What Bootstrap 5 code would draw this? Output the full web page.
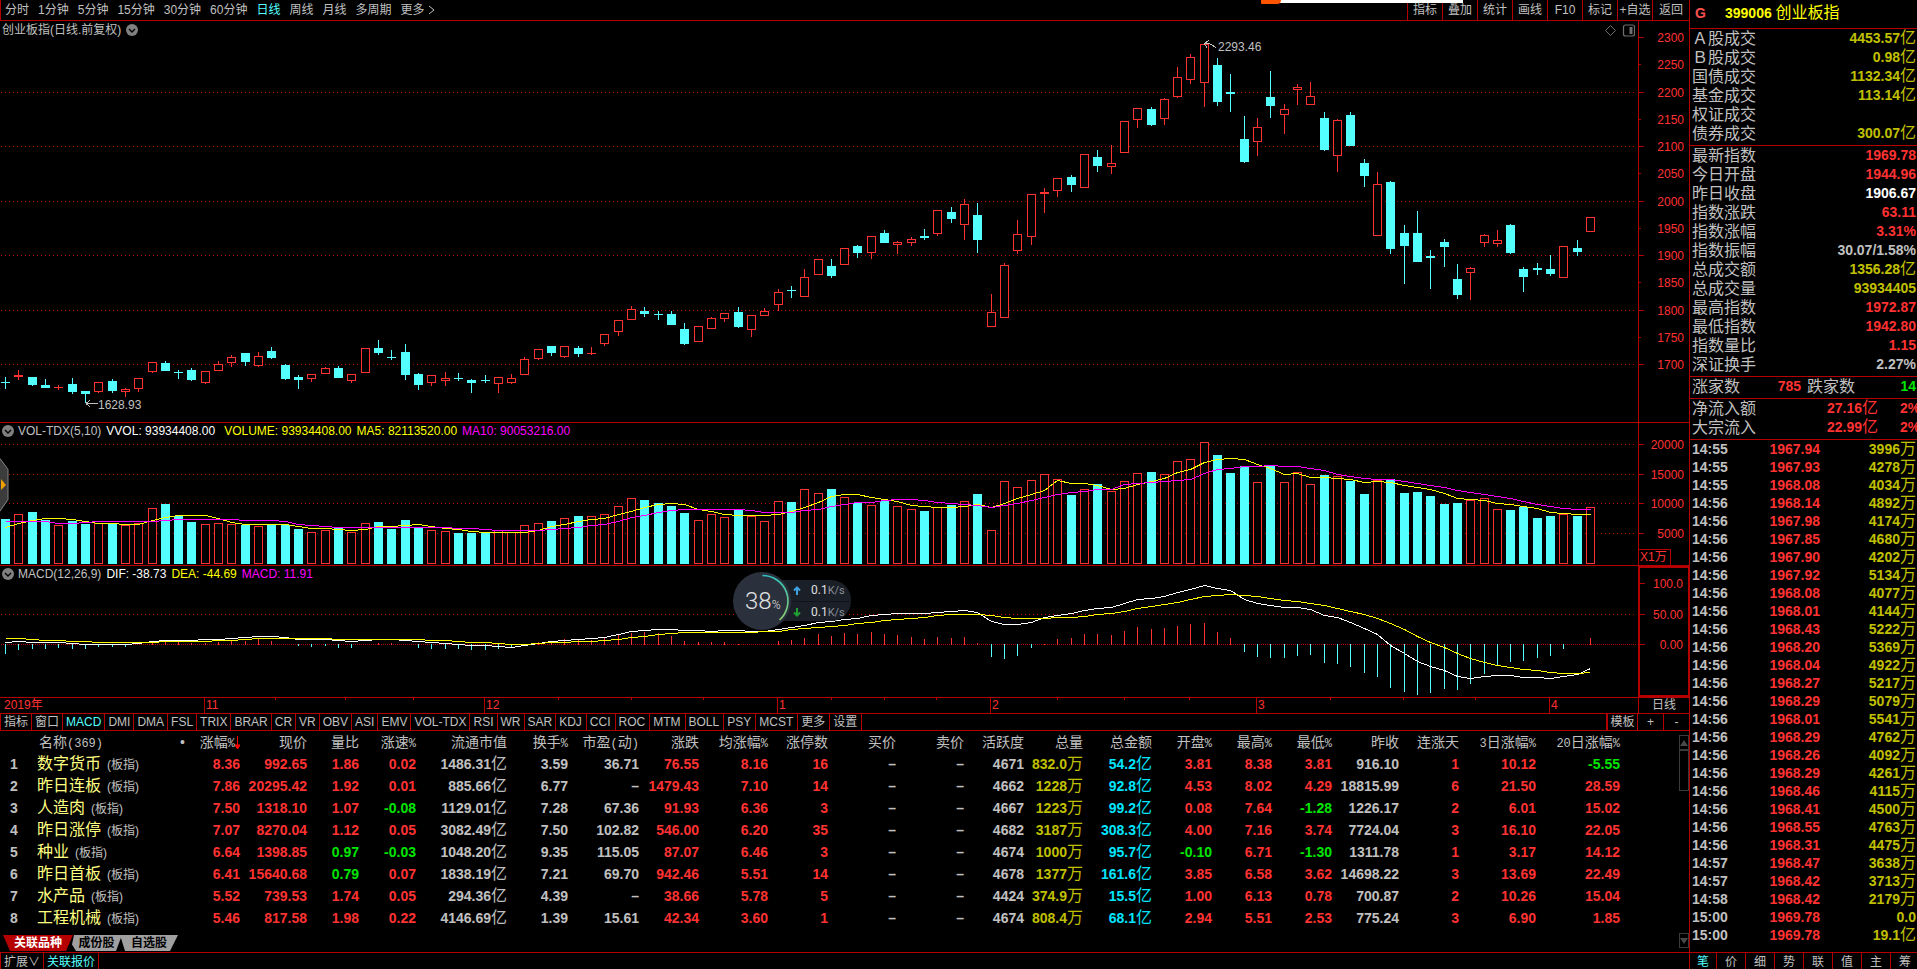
<!DOCTYPE html>
<html lang="zh-CN">
<head>
<meta charset="utf-8">
<meta name="viewport" content="width=device-width, initial-scale=1">
<title>399006 创业板指</title>
<link href="https://cdn.jsdelivr.net/npm/bootstrap@5.3.0/dist/css/bootstrap.min.css" rel="stylesheet">
<style>
:root{--line:#b40000;--up:#ff3232;--down:#00e600;--bar:#54ffff;--txt:#c0c0c0;--amt:#c0c000}
body{background:#000;color:var(--txt);font:12px/16px "Liberation Sans","Noto Sans CJK SC",sans-serif;overflow:hidden}
button{background:none;border:0;color:inherit;padding:0;font:inherit;white-space:nowrap}
.up{color:var(--up)}.down{color:var(--down)}.amt{color:var(--amt)}.cash{color:#00e6ff}.hot{color:var(--bar)!important}
.line-b{border-bottom:1px solid var(--line)}.line-t{border-top:1px solid var(--line)}.line-l{border-left:1px solid var(--line)}
.main-col{min-width:0}
.topbar{height:21px;line-height:17px}
.periods{gap:9px;padding-left:4px}
.tools button{width:35px;border-left:1px solid var(--line)}
.tools button:last-child{width:37px}
.strip{top:0;left:65.8%;width:10.5%;height:3px;background:#fff}
.strip::before{content:"";position:absolute;left:0;top:0;width:20px;height:4px;background:#ff5500;border-radius:0 0 12px 4px}
.pane-price{min-height:402px}.pane-vol{height:143px}.pane-macd{height:132px}
.plot{min-width:0}
.plot>svg{display:block;width:100%;height:100%;shape-rendering:crispEdges}
.axis{width:51px;border-left:1px solid var(--line);color:var(--up);text-align:right}
.axis.period{color:var(--txt);text-align:center}
.axis ol{list-style:none;margin:0;padding:0 5px 0 0}
.axis li{position:relative;line-height:16px}
.axis li::before{content:"";position:absolute;left:0;top:7px;width:5px;height:1px;background:var(--line)}
.axis li.half::before{width:2px}
.axis-price ol{height:100%;padding-top:9px;padding-bottom:49px}
.axis-vol ol{height:119px;padding-top:14px}
.unit-box{position:absolute;left:0;bottom:0;width:32px;border:1px solid var(--line);border-left:0;border-bottom:0;text-align:left;padding-left:1px;line-height:15px}
.axis-macd{border:2px solid var(--line);border-right-width:1px}
.axis-macd ol{height:85px;padding-top:8px}
.legend{position:absolute;left:2px;top:0;gap:5px;line-height:16px;white-space:nowrap}
.legend.caption{line-height:18px}
.legend svg{width:12px;height:12px}
.legend svg:first-child{margin-right:-1px}
.legend .wide{margin-right:4px}
.mark-low{position:absolute;left:98px;top:376px}
.mark-high{position:absolute;left:1218px;top:18px}
.corner{position:absolute;right:3px;top:3px}
.w{color:#fff}.y{color:#ff0}.m{color:#f0f}
.handle{left:0;top:458px}
.dates{height:16px;line-height:15px;color:var(--up)}
.months{display:grid;grid-template-columns:204fr 280fr 293fr 213fr 266fr 293fr 89fr}
.months span+span{border-left:1px solid var(--line);padding-left:1px}
.months span{position:relative}
.months i{position:absolute;top:0;left:25%;width:50%;height:2px;border:1px solid var(--line);border-width:0 1px}
.months i::after{content:"";position:absolute;left:50%;width:1px;height:2px;background:var(--line)}
.indicators{height:17px;line-height:15px}
.indicators button{padding:0 3px;border-right:1px solid var(--line)}
.indicators button:nth-child(n+18){padding-right:4px}
.indicators .end button{border-right:0;border-left:1px solid var(--line);width:26px}
.indicators .end button:first-child{width:31px;padding:0;border-left-width:2px}
.quote-area{height:221px}
.quotes{table-layout:fixed;width:100%;font-weight:700;font-size:14px;line-height:20px;color:var(--txt)}
.quotes td,.quotes th{height:22px;padding:0;text-align:right;white-space:nowrap}
.quotes th{font-weight:400}
.quotes td:first-child{text-align:center}
.quotes th:nth-child(2),.quotes td:nth-child(2){text-align:left;padding-left:9px}
.quotes th:nth-child(2){padding-left:11px}
.quotes .title{font-size:16px;color:#ffff80;font-weight:400}
.quotes .tag{font-size:12px;font-weight:400;margin-left:6px}
.quotes td span{line-height:16px}
.hw{font:12px/16px "Liberation Mono",monospace}
.unit{font-weight:400;font-size:16px;line-height:16px}
.scroll{width:14px}
.scroll .knob,.scroll .thumb{border:1px solid #3a3a3a}
.scroll .knob{height:15px;display:grid;place-items:center}
.scroll .thumb{height:41px}
.sheets{position:absolute;left:3px;bottom:1px;height:16px;line-height:16px;font-weight:700}
.sheets button{background:#a0a0a0;color:#000;height:16px}
.sheets .s1{background:var(--line);color:#fff;width:70px;clip-path:polygon(0 0,100% 0,calc(100% - 7px) 100%,7px 100%)}
.sheets .s2{width:51px;margin-left:-2px;clip-path:polygon(3px 0,100% 0,calc(100% - 6px) 100%,5px 100%,1px 60%)}
.sheets .s3{width:58px;margin-left:-2px;clip-path:polygon(0 0,100% 0,calc(100% - 8px) 100%,5px 100%)}
.foot{height:17px;line-height:18px}
.foot .cell{padding:0 3px;border-right:1px solid var(--line)}
.side{width:228px;border-left:1px solid var(--line);overflow:hidden;font-size:14px;font-weight:700}
.side h1{font-size:14px;line-height:26px;height:28px;margin:0;font-weight:700;padding-left:5px;color:#ff0}
.side h1 b{width:30px;color:#ff5050}
.side .k{font-size:16px;font-weight:400;color:var(--txt)}
.side .k.y{color:#ff0}
.side dl{margin:0;padding:0 1px 2px 2px;line-height:19px}
.side dl>div{display:flex;height:19px;white-space:nowrap}
.side dt,.side dd{margin:0}
.side dd{margin-left:auto}
.side .rise{width:61px;margin:0;text-align:right}
.side .fall{padding-left:6px}
.side dl.net dt{width:64px}
.side dl.net dd{flex:none}
.side dl.net dd:nth-of-type(1){width:122px;margin:0;text-align:right}
.side dl.net dd:nth-of-type(2){margin-left:22px}
.ticks{width:100%;table-layout:fixed;line-height:18px}
.ticks td{padding:0 1px 0 2px;height:18px}
.ticks td:first-child{width:54px}
.ticks td:nth-child(2){width:77px;text-align:right;color:var(--up)}
.ticks td:nth-child(3){text-align:right;color:var(--amt)}
.side nav{font-size:12px;font-weight:400;height:17px;line-height:18px}
.side nav button{width:29px;border-right:1px solid var(--line);flex:none}
.side nav button:first-child{width:27px}
.meter{left:733px;top:571px;width:118px;height:60px;font-family:Roboto,sans-serif;color:#e0e0e0}
.meter .dial{position:absolute;left:0;top:0}
.meter .pct{position:absolute;left:12px;top:17px;font-size:24px;line-height:26px;font-weight:300}
.meter .pct small{font-size:12px}
.meter .speed{position:absolute;left:48px;top:9px;width:70px;height:41px;background:#1b1f28;border-radius:0 20px 20px 0;padding-left:12px;line-height:20px}
.meter .speed div+div{border-top:1px solid #11141a}
.meter .speed svg{margin-right:10px}
.meter .speed small{font-size:11px;color:#8a8f98}
</style>
</head>
<body class="vh-100 d-flex position-relative">
<main class="main-col flex-grow-1 d-flex flex-column">
  <header class="topbar line-b d-flex justify-content-between">
    <nav class="periods d-flex line-l" aria-label="周期">
      <button>分时</button><button>1分钟</button><button>5分钟</button><button>15分钟</button><button>30分钟</button><button>60分钟</button><button class="hot">日线</button><button>周线</button><button>月线</button><button>多周期</button><button>更多 <svg width="7" height="10" viewBox="0 0 7 10" fill="none" stroke="#c0c0c0"><path d="M1 1l5 4-5 4"/></svg></button>
    </nav>
    <div class="tools d-flex"><button>指标</button><button>叠加</button><button>统计</button><button>画线</button><button>F10</button><button>标记</button><button>+自选</button><button>返回</button></div>
  </header>

  <section class="pane-price flex-grow-1 d-flex line-b">
    <div class="plot flex-grow-1 position-relative">
      <svg id="price" viewBox="0 0 1638 401" preserveAspectRatio="none"></svg>
      <div class="legend caption d-flex align-items-center"><span>创业板指(日线.前复权)</span><svg viewBox="0 0 12 12"><circle cx="6" cy="6" r="6" fill="#808080"/><path d="M3 5l3 3 3-3" fill="none" stroke="#000" stroke-width="1.4"/></svg></div>
      <span class="mark-low">1628.93</span><span class="mark-high">2293.46</span>
      <div class="corner"><svg class="d-block" width="30" height="13" viewBox="0 0 30 13" fill="none" stroke="#707070"><path d="M5.500 1.500l5 5-5 5-5-5z"/><rect x="18.500" y="1" width="11" height="11" rx="2" stroke-width="1.200"/><path d="M26 3v7" stroke-width="3"/></svg></div>
    </div>
    <div class="axis axis-price"><ol class="d-flex flex-column justify-content-between"><li>2300</li><li class="half">2250</li><li>2200</li><li class="half">2150</li><li>2100</li><li class="half">2050</li><li>2000</li><li class="half">1950</li><li>1900</li><li class="half">1850</li><li>1800</li><li class="half">1750</li><li>1700</li></ol></div>
  </section>

  <section class="pane-vol d-flex line-b">
    <div class="plot flex-grow-1 position-relative">
      <svg id="vol" viewBox="0 0 1638 142" preserveAspectRatio="none"></svg>
      <div class="legend d-flex align-items-center"><svg viewBox="0 0 12 12"><circle cx="6" cy="6" r="6" fill="#808080"/><path d="M3 5l3 3 3-3" fill="none" stroke="#000" stroke-width="1.4"/></svg><span>VOL-TDX(5,10)</span><span class="w wide">VVOL: 93934408.00</span><span class="y">VOLUME: 93934408.00</span><span class="y">MA5: 82113520.00</span><span class="m">MA10: 90053216.00</span></div>
    </div>
    <div class="axis axis-vol position-relative"><ol class="d-flex flex-column justify-content-between"><li>20000</li><li>15000</li><li>10000</li><li>5000</li></ol><span class="unit-box">X1万</span></div>
  </section>

  <section class="pane-macd d-flex line-b">
    <div class="plot flex-grow-1 position-relative">
      <svg id="macd" viewBox="0 0 1638 131" preserveAspectRatio="none"></svg>
      <div class="legend d-flex align-items-center"><svg viewBox="0 0 12 12"><circle cx="6" cy="6" r="6" fill="#808080"/><path d="M3 5l3 3 3-3" fill="none" stroke="#000" stroke-width="1.4"/></svg><span>MACD(12,26,9)</span><span class="w">DIF: -38.73</span><span class="y">DEA: -44.69</span><span class="m">MACD: 11.91</span></div>
    </div>
    <div class="axis axis-macd"><ol class="d-flex flex-column justify-content-between"><li>100.0</li><li>50.00</li><li>0.00</li></ol></div>
  </section>

  <div class="dates d-flex line-b">
    <div class="months flex-grow-1"><span class="ps-1">2019年</span><span>11<i></i></span><span>12<i></i></span><span>1<i></i></span><span>2<i></i></span><span>3<i></i></span><span>4</span></div>
    <div class="axis period">日线</div>
  </div>

  <div class="indicators line-b d-flex justify-content-between">
    <div class="d-flex line-l" id="indicators"></div>
    <div class="end d-flex"><button>模板</button><button>+</button><button>-</button></div>
  </div>

  <section class="quote-area d-flex position-relative">
    <div class="flex-grow-1"><table class="quotes"><colgroup id="cols"></colgroup><thead><tr id="heads"></tr></thead><tbody id="rows"></tbody></table></div>
    <div class="scroll d-flex flex-column justify-content-between pt-1" aria-hidden="true">
      <div><div class="knob"><svg width="8" height="6"><path d="M0 6l4-6 4 6z" fill="#484848"/></svg></div><div class="thumb"></div></div>
      <div class="knob mb-1"><svg width="8" height="6"><path d="M0 0l4 6 4-6z" fill="#484848"/></svg></div>
    </div>
    <div class="sheets d-flex"><button class="s1">关联品种</button><button class="s2">成份股</button><button class="s3">自选股</button></div>
  </section>

  <footer class="foot line-t d-flex"><button class="cell line-l">扩展∨</button><button class="cell hot">关联报价</button></footer>
</main>

<aside class="side d-flex flex-column flex-shrink-0">
  <h1 class="d-flex"><b>G</b><span>399006 <span class="k y">创业板指</span></span></h1>
  <dl class="line-t" id="turnover"></dl>
  <dl class="line-t" id="stats"></dl>
  <dl class="line-t"><div><dt class="k">涨家数</dt><dd class="up rise">785</dd><dt class="k fall">跌家数</dt><dd class="down">14</dd></div></dl>
  <dl class="line-t net"><div><dt class="k">净流入额</dt><dd class="up">27.16<span class="unit">亿</span></dd><dd class="up">2%</dd></div><div><dt class="k">大宗流入</dt><dd class="up">22.99<span class="unit">亿</span></dd><dd class="up">2%</dd></div></dl>
  <div class="line-t"><table class="ticks"><tbody id="ticks"></tbody></table></div>
  <nav class="line-t d-flex mt-auto" aria-label="明细"><button class="hot">笔</button><button>价</button><button>细</button><button>势</button><button>联</button><button>值</button><button>主</button><button>筹</button></nav>
</aside>

<div class="strip position-absolute"></div>
<svg class="handle position-absolute" width="9" height="54" viewBox="0 0 9 54"><path d="M0 0l8 11v31L0 54z" fill="#3c3c3c"/><path d="M0 .5l8 11v30L0 53" fill="none" stroke="#808080"/><path d="M1 21l5 6-5 5z" fill="#f0a000"/></svg>
<div class="meter position-absolute">
  <div class="speed"><div><svg width="8" height="9" viewBox="0 0 8 9"><path d="M4 9V3M1 4.500l3-3 3 3" fill="none" stroke="#3fa0e0" stroke-width="2"/></svg>0.1<small>K/s</small></div><div><svg width="8" height="9" viewBox="0 0 8 9"><path d="M4 0v6M1 4.500l3 3 3-3" fill="none" stroke="#20a030" stroke-width="2"/></svg>0.1<small>K/s</small></div></div>
  <svg class="dial" width="60" height="60" viewBox="0 0 60 60"><defs><linearGradient id="ring" x1="0" y1="0" x2="0" y2="1"><stop offset="0" stop-color="#2fc4c0"/><stop offset="1" stop-color="#8fd070"/></linearGradient></defs><circle cx="29" cy="30" r="29" fill="#2b303d"/><path d="M29.500 4.500A25.500 25.500 0 0 1 46.500 49" fill="none" stroke="url(#ring)" stroke-width="1.600"/></svg>
  <div class="pct">38<small>%</small></div>
</div>

<script>
// Bars: colour, high, body top, body bottom, low. All y values are thirds of a pixel from each block's base.
const bars=[[960,`c171 186 189 207,r150 165 171 180,c171 171 195 198,c177 195 204 204,r195 201 204 210,c174 192 216 222,c213 213 222 250,r186 186 216 219,c177 183 213 219,r204 207 216 231,r174 174 207 216,r126 126 156 159,c123 129 153 153,c150 156 159 177,c144 150 180 183,r153 153 189 192,r123 132 153 153,r105 111 129 140,c99 99 126 138,r96 108 138 141,c81 93 114 117,c132 135 177 180,c165 171 180 207,r162 162 177 186,r141 144 162 162,c138 144 174 174,r162 162 183 189,r84 84 159 159,c60 84 99 105,c90 111 114 120,c72 96 165 180,c159 162 195 210,r165 165 189 198,r156 174 183 198,c159 174 177 183,c177 180 189 219,c165 180 183 189,r171 171 192 219,r162 174 189 192,r111 117 165 165,r87 87 117 120,c78 78 99 108`],
[510,`r528 528 561 564,c528 534 552 561,r531 549 552 555,r492 492 522 528,r450 450 486 498,r408 417 450 450,c411 423 432 441,c423 432 435 450,c423 432 465 465,c459 477 522 525,r468 468 516 516,r441 444 477 477,r429 429 447 456,c411 426 471 474,r435 435 480 501,r414 423 438 438,r357 366 405 423,c348 360 363 384,r297 321 381 381,r267 267 315 315,c267 288 318 324,r234 234 285 285,c225 228 249 264,r198 198 249 267,c180 189 219 219,r213 216 225 252,r201 207 219 228,c177 198 204 210,r120 120 192 198,c111 126 147 159,r87 102 165 210,c99 135 210 249,r372 426 471 471,r279 285 444 444,r150 192 243 252,r72 72 201 225,r54 66 72 129,r24 24 63 81,c15 21 45 66`],
[0,`r462 462 564 564,c450 471 498 516,r435 489 501 522,r363 363 459 459,r324 324 360 384,c321 327 375 378,r294 297 357 375,r201 231 291 294,r162 171 240 252,r132 132 249 321,c174 195 306 318,c222 276 282 336,c348 417 486 489,r354 381 426 468,c213 291 318 354,r312 327 345 402,r252 261 270 315,r246 288 315 315,c336 354 450 453,r357 360 468 516,c336 345 438 438,c477 489 528 561,r516 552 708 708,c543 546 747 762,c675 699 738 852,c633 699 786 786,c750 768 774 867,c717 726 741 801,c792 837 885 897,r801 804 819 900,r702 705 729 741,r690 720 732 741,c672 675 759 762,c801 807 831 876,c789 804 810 825,c765 807 822 828,r738 738 834 834,c720 744 756 768,r651 651 696 696`]]
.flatMap(([b,s])=>s.split(',').map(t=>({c:t[0],v:t.slice(1).split(' ').map(n=>Math.round((+n+b)/3)-21)})));
const seq=(...parts)=>parts.flatMap(([b,s])=>s.split(' ').map(n=>+n+b));
const vol=seq([-300,'597 582 576 600 615 603 612 609 612 615 609 564 552 588 606 612 609 612 615 618 615 615 627 636 630 621 636 609 606 627 600 624 630 633 640 640 637 630 637 615 609 603'],[0,'294 288 288 282 258 234 240 249 258 279 300 282 291 270 288 303 243 246 207 219 207 231 249 255 243 258 267 273 261 255 243 222 330 183 201 180 162 177 225 207 192 213 183 159 156 162 123 117 66 105 159 138 186 138 186 156 192 165 168 183 222 180 177 219 216 228 252 249 240 234 267 270 261 294 288 282 288 261']);
const ma5=seq([-300,'620 610 601 595 595 598 604 610 610 611 613 601 592 586 586 586 594 606 613 613 613 613 618 623 625 626 631 628 619 619 616 613 618 624 626 634 637 637 637 636 629 619'],[0,'313 304 298 293 283 272 262 253 250 253 267 273 283 286 286 286 281 273 262 246 227 223 223 230 238 244 254 259 262 262 259 252 261 248 235 223 210 181 189 190 194 206 204 192 182 175 157 147 127 116 115 118 133 145 163 160 171 170 175 176 187 183 187 196 201 206 220 235 238 241 250 253 257 265 277 280 283 283']);
const ma10=seq([-300,'604 604 604 604 610 610 607 604 604 604 604 604 601 598 598 598 598 598 601 601 601 604 613 616 619 622 622 622 622 622 622 622 622 622 624 625 626 631 631 629 629 628'],[0,'324 320 316 311 302 292 284 277 271 268 268 268 268 268 271 276 277 277 271 266 257 251 247 247 241 238 238 241 247 250 253 255 261 254 249 240 232 223 217 212 208 208 193 190 187 184 181 176 160 148 144 139 139 136 138 139 144 151 162 169 175 178 178 183 189 196 202 211 217 223 227 235 243 253 259 265 268 268']);
const dif=seq([420,'247 244 247 247 247 250 253 251 253 253 250 244 241 241 241 238 238 233 232 229 229 232 238 238 238 241 244 239 236 236 239 244 247 250 253 256 256 257 260 255 248 242'],[0,'659 656 655 650 641 633 629 626 626 629 631 632 629 630 632 632 628 622 614 606 602 598 593 584 583 580 580 579 575 574 569 577 602 611 613 605 592 584 580 571 565 562 550 538 535 529 517 508 496 505 511 538 550 556 562 562 566 586 592 606 625 643 675 700 723 739 749 767 774 769 766 766 771 772 775 767 761 744']);
const dea=seq([420,'235 235 238 241 241 244 244 247 247 247 247 247 244 244 244 244 241 241 238 235 235 235 235 235 235 238 238 238 238 238 238 238 241 241 244 247 247 250 253 253 250 247'],[0,'667 664 662 661 656 652 647 643 638 637 637 635 635 635 635 633 632 628 625 622 619 614 610 605 599 597 593 590 586 583 581 581 586 590 595 595 595 592 592 588 583 578 574 565 559 553 547 538 529 526 523 525 529 535 541 544 550 556 563 572 583 595 610 628 647 666 682 700 715 727 734 742 748 751 757 760 760 756']);
const hist=seq([0,'702 690 687 687 684 687 687 681 681 681 673 669 666 667 669 669 666 662 662 658 663 673 679 681 678 684 684 673 669 669 673 684 687 687 687 690 690 686 684 673 667 663 658 660 660 654 645 639 636 640 648 663 666 666 666 672 673 673 663 660 654 642 648 640 642 636 642 645 651 657 651 654 651 669 711 717 708 684 672 657 654 642 642 645 633 621 627 624 618 612 609 636 654 696 711 714 714 708 705 729 732 741 759 771 804 816 825 819 807 810 792 762 738 726 723 714 708 687 673 654']);
const UP='#ff3232',DN='#54ffff',X=i=>Math.round(5+i*13.32);
const grid=(ys,d='1 3')=>ys.map(y=>`<path d="M1 ${y}.5H1636" stroke="#b40000" stroke-dasharray="${d}"/>`).join('');
const rect=(x,y,w,h,f)=>`<rect x="${x}" y="${y}" width="${w}" height="${h}" fill="${f}"/>`;
const hollow=(x,y,w,h)=>`<rect x="${x+.5}" y="${y+.5}" width="${w-1}" height="${Math.max(h-1,1)}" fill="#000" stroke="${UP}"/>`;
const curve=(a,off,c)=>`<polyline fill="none" stroke="${c}" points="${a.map((v,i)=>X(i)+.5+','+(Math.round(v/3-off)+.5)).join(' ')}"/>`;
const $=id=>document.getElementById(id);
$('price').innerHTML=grid([71,125,180,234,289,343])+bars.map(({c,v:[h,t,b,l]},i)=>{const x=X(i),f=c=='r'?UP:DN,n=Math.max(b-t,1);
  return rect(x,h,1,Math.max(l-h,1),f)+(c=='r'&&n>2?hollow(x-4,t,9,n):rect(x-4,t,9,n,f))}).join('')
  +'<path d="M86 382.500h12M86 382.500l4-3M86 382.500l4 3M1204 22.500h5l7 4M1204 22.500l5-3M1204 22.500l3 4" fill="none" stroke="#c0c0c0"/>';
$('vol').innerHTML=grid([21,51,80,110])+vol.map((v,i)=>{const y=Math.round(v/3)-3,x=X(i)-4;return bars[i].c=='r'?hollow(x,y,9,141-y):rect(x,y,9,141-y,DN)}).join('')+curve(ma5,3,'#ff0')+curve(ma10,3,'#f0f');
$('macd').innerHTML=grid([48])+grid([78],'1 1')+hist.map((v,i)=>{const y=Math.round(v/3)-146;return v<673?rect(X(i),y,1,79-y,UP):v>673?rect(X(i),78,1,y-78,DN):''}).join('')+curve(dif,146,'#fff')+curve(dea,146,'#ff0');

$('indicators').innerHTML='指标 窗口 MACD DMI DMA FSL TRIX BRAR CR VR OBV ASI EMV VOL-TDX RSI WR SAR KDJ CCI ROC MTM BOLL PSY MCST 更多 设置'.split(' ').map(t=>`<button${t=='MACD'?' class="hot"':''}>${t}</button>`).join('');

const unit=t=>t.replace(/[亿万]/,'<span class="unit">$&</span>');
$('cols').innerHTML=[28,157,55,67,52,57,91,61,71,60,69,60,68,68,60,59,69,60,60,60,67,60,77,84,0].map(w=>w?`<col style="width:${w}px">`:'<col>').join('');
$('heads').innerHTML='|名称(369)|涨幅%|现价|量比|涨速%|流通市值|换手%|市盈(动)|涨跌|均涨幅%|涨停数|买价|卖价|活跃度|总量|总金额|开盘%|最高%|最低%|昨收|连涨天|3日涨幅%|20日涨幅%|'.split('|').map((t,i)=>`<th scope="col">${t.replace(/[!-~]+/g,'<span class="hw">$&</span>')}${i==1?'<span class="float-end">•</span>':''}${i==2?'<svg width="5" height="14" viewBox="0 0 5 14"><path d="M2.500 0v12M0 9l2.500 4L5 9z" stroke="red" fill="red"/></svg>':''}</th>`).join('');
const tone=(i,t)=>i==15?'amt':i==16?'cash':[6,7,8,12,13,14,20].includes(i)?'':i==4?(+t<1?'down':'up'):t[0]=='-'?'down':'up';
$('rows').innerHTML=`数字货币 8.36 992.65 1.86 0.02 1486.31亿 3.59 36.71 76.55 8.16 16 – – 4671 832.0万 54.2亿 3.81 8.38 3.81 916.10 1 10.12 -5.55
昨日连板 7.86 20295.42 1.92 0.01 885.66亿 6.77 – 1479.43 7.10 14 – – 4662 1228万 92.8亿 4.53 8.02 4.29 18815.99 6 21.50 28.59
人造肉 7.50 1318.10 1.07 -0.08 1129.01亿 7.28 67.36 91.93 6.36 3 – – 4667 1223万 99.2亿 0.08 7.64 -1.28 1226.17 2 6.01 15.02
昨日涨停 7.07 8270.04 1.12 0.05 3082.49亿 7.50 102.82 546.00 6.20 35 – – 4682 3187万 308.3亿 4.00 7.16 3.74 7724.04 3 16.10 22.05
种业 6.64 1398.85 0.97 -0.03 1048.20亿 9.35 115.05 87.07 6.46 3 – – 4674 1000万 95.7亿 -0.10 6.71 -1.30 1311.78 1 3.17 14.12
昨日首板 6.41 15640.68 0.79 0.07 1838.19亿 7.21 69.70 942.46 5.51 14 – – 4678 1377万 161.6亿 3.85 6.58 3.62 14698.22 3 13.69 22.49
水产品 5.52 739.53 1.74 0.05 294.36亿 4.39 – 38.66 5.78 5 – – 4424 374.9万 15.5亿 1.00 6.13 0.78 700.87 2 10.26 15.04
工程机械 5.46 817.58 1.98 0.22 4146.69亿 1.39 15.61 42.34 3.60 1 – – 4674 808.4万 68.1亿 2.94 5.51 2.53 775.24 3 6.90 1.85`.split('\n').map((r,n)=>'<tr><td>'+(n+1)+'</td>'+r.split(' ').map((t,k)=>k?`<td class="${tone(k+1,t)}">${unit(t)}</td>`:`<td><span class="title">${t}</span><span class="tag">(板指)</span></td>`).join('')+'<td></td></tr>').join('');

const list=s=>s.split(',').map(r=>{const[k,c,v]=r.split(':');return`<div><dt class="k">${k}</dt><dd class="${c}">${unit(v)}</dd></div>`}).join('');
$('turnover').innerHTML=list('Ａ股成交:amt:4453.57亿,Ｂ股成交:amt:0.98亿,国债成交:amt:1132.34亿,基金成交:amt:113.14亿,权证成交:amt:,债券成交:amt:300.07亿');
$('stats').innerHTML=list('最新指数:up:1969.78,今日开盘:up:1944.96,昨日收盘:w:1906.67,指数涨跌:up:63.11,指数涨幅:up:3.31%,指数振幅::30.07/1.58%,总成交额:amt:1356.28亿,总成交量:amt:93934405,最高指数:up:1972.87,最低指数:up:1942.80,指数量比:up:1.15,深证换手::2.27%');
const amounts='3996 4278 4034 4892 4174 4680 4202 5134 4077 4144 5222 5369 4922 5217 5079 5541 4762 4092 4261 4115 4500 4763 4475 3638 3713 2179'.split(' ').map(a=>a+'万').concat('0.0','19.1亿');
$('ticks').innerHTML='67.94 67.93 68.08 68.14 67.98 67.85 67.90 67.92 68.08 68.01 68.43 68.20 68.04 68.27 68.29 68.01 68.29 68.26 68.29 68.46 68.41 68.55 68.31 68.47 68.42 68.42 69.78 69.78'.split(' ').map((p,i)=>`<tr><td>${i<3?'14:55':i<23?'14:56':i<25?'14:57':i<26?'14:58':'15:00'}</td><td>19${p}</td><td>${unit(amounts[i])}</td></tr>`).join('');
</script>
<script src="https://cdn.jsdelivr.net/npm/bootstrap@5.3.0/dist/js/bootstrap.bundle.min.js"></script>
</body>
</html>
